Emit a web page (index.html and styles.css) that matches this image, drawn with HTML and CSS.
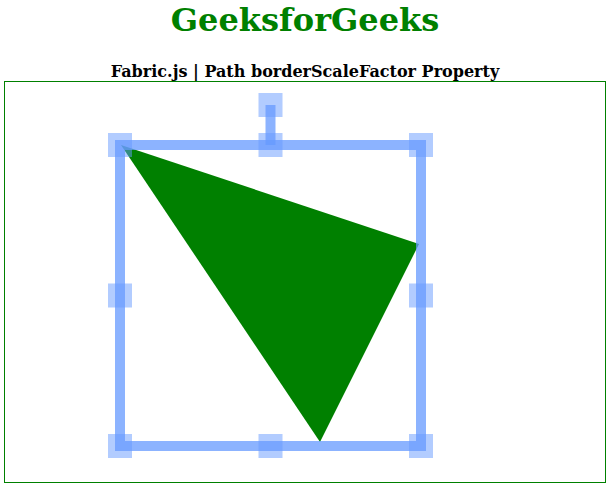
FILE: index.html
```html
<!DOCTYPE html>
<html>
<head>
<meta charset="utf-8">
<link rel="stylesheet" href="styles.css">
</head>
<body>
<div class="page">
  <h1 class="title">GeeksforGeeks</h1>
  <b class="subtitle">Fabric.js | Path borderScaleFactor Property</b>
  <div class="canvas">
    <svg width="600" height="400" viewBox="0 0 600 400" xmlns="http://www.w3.org/2000/svg">
      <polygon points="116,63 414,162 315,360" fill="#008000"/>
      <rect x="115" y="63" width="301" height="301" fill="none" stroke="rgba(102,153,255,0.75)" stroke-width="10"/>
      <line x1="265.5" y1="23" x2="265.5" y2="63" stroke="rgba(102,153,255,0.75)" stroke-width="10"/>
      <g fill="rgba(102,153,255,0.5)">
        <rect x="103" y="51" width="24" height="24"/>
        <rect x="253.5" y="51" width="24" height="24"/>
        <rect x="404" y="51" width="24" height="24"/>
        <rect x="103" y="201.5" width="24" height="24"/>
        <rect x="404" y="201.5" width="24" height="24"/>
        <rect x="103" y="352" width="24" height="24"/>
        <rect x="253.5" y="352" width="24" height="24"/>
        <rect x="404" y="352" width="24" height="24"/>
        <rect x="253.5" y="11" width="24" height="24"/>
      </g>
    </svg>
  </div>
</div>
</body>
</html>
```

FILE: styles.css
```css
html, body {
  margin: 0;
  padding: 0;
  background: #ffffff;
}
.page {
  padding-top: 1px;
  display: flex;
  flex-direction: column;
  align-items: center;
  font-family: "DejaVu Serif", serif;
}
.title {
  margin: 0 0 24px 0;
  font-size: 32px;
  font-weight: bold;
  color: #008000;
  line-height: normal;
}
.subtitle {
  font-size: 16px;
  font-weight: bold;
  color: #000000;
  line-height: 18px;
}
.canvas {
  align-self: flex-start;
  margin-left: 4px;
  width: 600px;
  height: 400px;
  border: 1px solid #008000;
}
.canvas svg {
  display: block;
}
```
